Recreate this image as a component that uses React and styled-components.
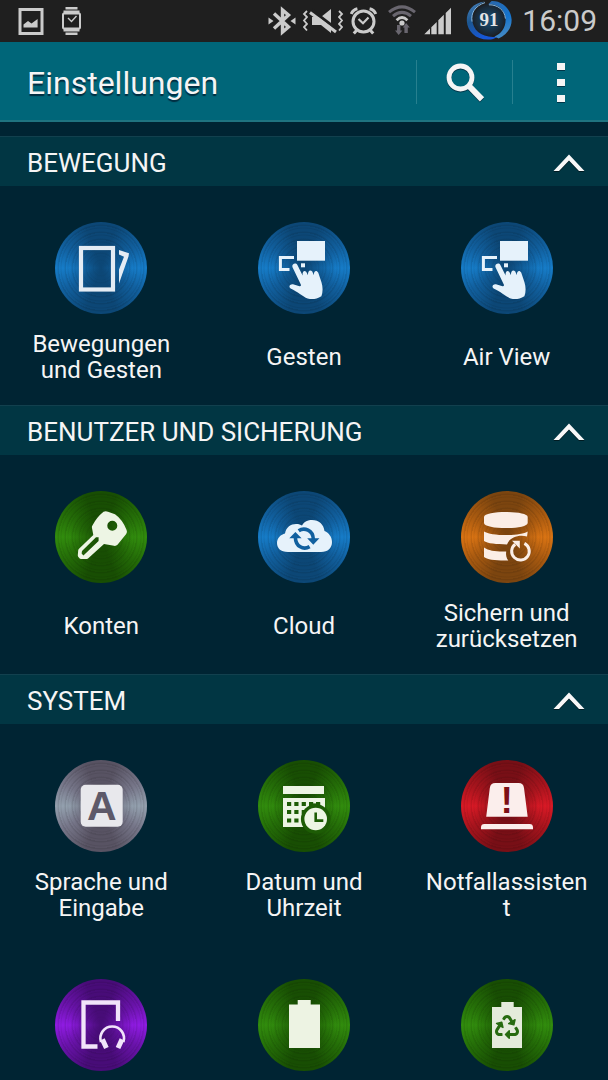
import React, { useState } from 'react';
import styled, { createGlobalStyle } from 'styled-components';
import { FaRecycle } from 'react-icons/fa';

const GlobalStyle = createGlobalStyle`
  * {
    box-sizing: border-box;
  }
  body {
    margin: 0;
    background-color: #002433;
    font-family: Roboto, "Liberation Sans", sans-serif;
    color: #f5f5f5;
  }
`

const Screen = styled.div`
  height: 100vh;
  display: flex;
  flex-direction: column;
  overflow: hidden;
`

const StatusBar = styled.div`
  flex: none;
  height: 42px;
  padding: 0 11px 0 18px;
  display: flex;
  justify-content: space-between;
  background-color: #1f1f1f;
  color: #cbcbcb;
`

const StatusGroup = styled.div`
  display: flex;
  align-items: center;
  gap: ${({ $gap }) => $gap}px;
`

const StatusSvg = styled.svg`
  display: block;
  height: 42px;
  fill: none;
  stroke: none;
`

const Clock = styled.span`
  font-size: 30px;
  line-height: 42px;
`

const ActionBar = styled.header`
  flex: none;
  height: 80px;
  display: flex;
  align-items: center;
  background-color: #006679;
  border-bottom: 2px solid #1f7380;
`

const Title = styled.h1`
  flex: 1;
  margin: 0;
  padding: 4px 0 0 27px;
  font-size: 32px;
  font-weight: 400;
  text-shadow: 0 2px 1px rgba(0, 20, 40, 0.7);
`

const ActionButton = styled.button`
  width: 96px;
  height: 44px;
  margin-top: 2px;
  padding: 0;
  border: 0;
  border-left: 1px solid #27808f;
  background: none;
  display: flex;
  align-items: center;
  justify-content: center;
  cursor: pointer;

  svg {
    filter: drop-shadow(0 1px 0 rgba(0, 20, 40, 0.6));
  }
`

const List = styled.main`
  flex: 1;
  min-height: 0;
  padding-top: 14px;
  overflow-y: auto;
  scrollbar-width: none;
`

const SectionHeader = styled.button`
  width: 100%;
  height: 50px;
  padding: 2px 23px 0 27px;
  border: 0;
  border-top: 1px solid #12404e;
  display: flex;
  align-items: center;
  justify-content: space-between;
  background-color: #013643;
  color: inherit;
  font-family: inherit;
  font-size: 26px;
  text-transform: uppercase;
  cursor: pointer;
`

const Chevron = styled.svg`
  transform: ${({ $open }) => ($open ? 'none' : 'rotate(180deg)')};
  filter: drop-shadow(0 1px 0 rgba(0, 0, 0, 0.5));
`

const Grid = styled.div`
  display: grid;
  grid-template-columns: repeat(3, 1fr);
`

const Tile = styled.a`
  height: 219px;
  padding: 36px 20px 5px;
  display: flex;
  flex-direction: column;
  align-items: center;
  color: inherit;
  text-decoration: none;
`

const Disc = styled.span`
  flex: none;
  width: 92px;
  height: 92px;
  border-radius: 50%;
  background:
    radial-gradient(circle, ${({ $metal }) => $metal.dark} 0%, transparent 50%),
    repeating-radial-gradient(circle, rgba(0, 0, 0, 0.09) 0 1px, transparent 2px 4px, rgba(0, 0, 0, 0.07) 5px, transparent 6px 7px),
    conic-gradient(
      ${({ $metal }) => `${$metal.dark} 0deg 20deg, ${$metal.mid} 60deg, ${$metal.bright} 90deg, ${$metal.mid} 120deg, ${$metal.dark} 160deg 200deg, ${$metal.mid} 240deg, ${$metal.bright} 270deg, ${$metal.mid} 300deg, ${$metal.dark} 340deg`}
    );

  svg {
    display: block;
  }
`

const Label = styled.span`
  flex: 1;
  width: 100%;
  display: flex;
  align-items: center;
  justify-content: center;
  text-align: center;
  font-size: 24px;
  line-height: 26px;
  overflow-wrap: anywhere;
`

const metals = {
  blue: { bright: '#167cc8', mid: '#11609f', dark: '#0c4776' },
  green: { bright: '#318c0d', mid: '#256f08', dark: '#184e03' },
  orange: { bright: '#d97313', mid: '#ab5b10', dark: '#7c450f' },
  gray: { bright: '#93a0ae', mid: '#77778a', dark: '#585363' },
  red: { bright: '#d81925', mid: '#a8141d', dark: '#780f16' },
  purple: { bright: '#8f1be2', mid: '#6a13ab', dark: '#480c78' },
}

const Glyph = ({ children, fill = '#e6f2fb' }) => (
  <svg width="92" height="92" viewBox="0 0 92 92" fill={fill} aria-hidden="true">
    {children}
  </svg>
)

const MotionGlyph = () => (
  <Glyph fill="#e4ecf4">
    <rect x="26" y="26" width="32" height="41.5" fill="none" stroke="#e4ecf4" strokeWidth="4.2" />
    <path d="M64 28L74 31.3L73.5 34.5L64 61.5V47.5L69 34.8L64 32.5Z" />
  </Glyph>
)

const HandGlyph = () => (
  <Glyph>
    <rect x="39" y="19" width="28" height="19.7" />
    <path d="M36 35.5H22.4V47.6H31.5" fill="none" stroke="#e6f2fb" strokeWidth="3" />
    <rect x="43" y="41.3" width="4" height="4" />
    <path d="M34.4 45C33.6 42 37.8 40.2 39.4 43L44.6 53.4C44.2 49.2 46.3 47.8 48.2 49.8L50 53.2C49.6 48.6 52.4 47.2 54.3 49.6L55.8 53.2C55.6 48.8 58.6 47.6 60.2 50.6L63.4 60C65 65 65 70 63.4 74.2C58.6 77.2 53.8 77.8 49.6 76.4C44.6 74.4 39.8 69.6 32.6 66.4C30.4 65 31.6 61.8 35 62.3L41.6 64.2C42.8 64.4 43.2 63.6 42.8 62.6Z" />
  </Glyph>
)

const KeyGlyph = () => (
  <Glyph fill="#edf5e4">
    <path
      fillRule="evenodd"
      d="M48.5 20.8Q50.7 19.6 53 20.7L60 23.3Q67.5 28.5 71.6 39Q72.6 41.3 71.2 43L62.5 53.8Q61 55.2 59 54.8L49 53L33 67.4Q32 68 31 68H26Q25 68 24.4 67.2L23.2 65.8Q22.7 65 22.8 64L23.2 59.4Q23.3 58.6 24 57.8L38.3 44L36.9 36.6Q36.7 35.4 37.4 34.4Q42 26 48.5 20.8ZM57.3 29.7A5 5 0 1 0 57.3 39.7A5 5 0 1 0 57.3 29.7ZM41 46.3L27 59.9L26.6 62.6L28.4 64.4L43.6 49.9V46.3Z"
    />
  </Glyph>
)

const CloudGlyph = () => (
  <Glyph>
    <path d="M30 61C22.5 61 19 57 19 52C19 47 23 43.4 27 42.5C28 36 33 33 38 33C41 33 42.6 33.6 44 34.5C46 30.6 50 29 54 29C61 29 65.8 33.5 66.5 40C71 42 74 46 74 51C74 57 70 61 63 61Z" />
    <g fill="none" stroke="#11609f" strokeWidth="3.6">
      <path d="M40.7 39.8C46.4 35.8 55 39.4 55.3 48" />
      <path d="M37.4 46.6C37.6 55.4 45.4 59.4 51.6 55.6" />
    </g>
    <path d="M49.2 47.3H61.4L55.3 53.8ZM31.3 47.3H43.6L37.4 40.9Z" fill="#11609f" />
  </Glyph>
)

const BackupGlyph = () => (
  <Glyph fill="#fbeee6">
    <path d="M23 26C23 19.4 66.7 19.4 66.7 26V32C66.7 38.8 23 38.8 23 32Z" />
    <path d="M23 40.4C30 45.2 60 45.2 66.7 40.4L66 45.4C57 43.4 48.6 46.6 46 53.4C36 53.4 26 52.4 23 50Z" />
    <path d="M23 56.4C28 59.8 36 60.8 45.2 60.4C44.6 64 45.5 67 47.3 69.5C36 69.8 26 68.8 23 66Z" />
    <path d="M63.4 52.4A8.8 8.8 0 1 1 54.2 53.2" fill="none" stroke="#fbeee6" strokeWidth="3" />
    <path d="M51 49.8H58.8V57.4L56.2 55L53.8 52.6Z" />
  </Glyph>
)

const LanguageGlyph = () => (
  <Glyph fill="#e8e8ec">
    <rect x="25.7" y="24.7" width="42" height="42" rx="5" />
    <text x="46.7" y="60" textAnchor="middle" fontFamily="Liberation Sans, sans-serif" fontWeight="700" fontSize="41" fill="#5d5969">A</text>
  </Glyph>
)

const calendarDays = [
  [29, 42], [36.3, 42], [43.7, 42], [51, 42], [58, 42],
  [29, 50], [36.3, 50],
  [29, 58.5], [36.3, 58.5],
]

const DateGlyph = () => (
  <Glyph fill="#edf5e4">
    <rect x="25" y="26" width="41" height="8" />
    <path d="M25 38H67V50H57V67H25Z" />
    <g fill="#1d5c05">
      {calendarDays.map(([x, y]) => (
        <rect key={`${x}-${y}`} x={x} y={y} width="4.2" height="4" />
      ))}
      <rect x="43.7" y="50" width="3" height="4" />
      <rect x="52.5" y="43.4" width="9.6" height="4" />
      <circle cx="57.7" cy="59" r="14.8" />
    </g>
    <circle cx="57.7" cy="59" r="11.3" />
    <path d="M57.7 52.5V60.6H65.3" fill="none" stroke="#1d5c05" strokeWidth="2.6" />
  </Glyph>
)

const EmergencyGlyph = () => (
  <Glyph fill="#fbeeec">
    <path d="M28.8 28Q29.4 23 34.4 23H57.6Q62.4 23 63 28L66.7 56.8H25.2Z" />
    <path d="M20 69.3V67.4Q20 64 23.4 64H68.6Q72 64 72 67.4V69.3Z" />
    <text x="45.7" y="53" textAnchor="middle" fontFamily="Liberation Sans, sans-serif" fontWeight="700" fontSize="36" fill="#7d1016">!</text>
  </Glyph>
)

const AccessoryGlyph = () => (
  <Glyph fill="#f1e4fa">
    <g fill="none" stroke="#f1e4fa">
      <path d="M63 42V23.5H28.5V67.5H42.5" strokeWidth="4.3" />
      <path d="M46 63A11.8 11.8 0 1 1 68.4 63" strokeWidth="2.6" />
      <path d="M47.4 60.4L51.4 69M67 60.4L63 69" strokeWidth="5" />
    </g>
  </Glyph>
)

const BatteryGlyph = () => (
  <Glyph fill="#edf3e3">
    <path d="M31 25.5H39.7V21H52.7V25.5H62V69H31Z" />
  </Glyph>
)

const PowerSavingGlyph = () => (
  <Glyph fill="#e4ebdb">
    <path d="M31 28H40.3V23H52.7V28H61V69H31Z" />
    <FaRecycle x="34" y="36" size={24} color="#276b10" />
  </Glyph>
)

const sections = [
  {
    name: 'Bewegung',
    items: [
      { label: 'Bewegungen und Gesten', metal: 'blue', icon: MotionGlyph },
      { label: 'Gesten', metal: 'blue', icon: HandGlyph },
      { label: 'Air View', metal: 'blue', icon: HandGlyph },
    ],
  },
  {
    name: 'Benutzer und Sicherung',
    items: [
      { label: 'Konten', metal: 'green', icon: KeyGlyph },
      { label: 'Cloud', metal: 'blue', icon: CloudGlyph },
      { label: 'Sichern und zurücksetzen', metal: 'orange', icon: BackupGlyph },
    ],
  },
  {
    name: 'System',
    items: [
      { label: 'Sprache und Eingabe', metal: 'gray', icon: LanguageGlyph },
      { label: 'Datum und Uhrzeit', metal: 'green', icon: DateGlyph },
      { label: 'Notfallassistent', metal: 'red', icon: EmergencyGlyph },
      { label: 'Zubehör', metal: 'purple', icon: AccessoryGlyph, iconOnly: true },
      { label: 'Akku', metal: 'green', icon: BatteryGlyph, iconOnly: true },
      { label: 'Energie sparen', metal: 'green', icon: PowerSavingGlyph, iconOnly: true },
    ],
  },
]

const Status = () => (
  <StatusBar>
    <StatusGroup $gap={17}>
      <StatusSvg width="26" viewBox="0 0 26 42">
        <rect x="2" y="9.5" width="22" height="24" stroke="#cbcbcb" strokeWidth="3" />
        <path d="M5.5 27.6V24.5L10 21L13.5 23.5L19.6 19V27.6Z" fill="#cbcbcb" />
      </StatusSvg>
      <StatusSvg width="22" viewBox="0 0 22 42">
        <path d="M4.5 7H16.5V9.5H4.5ZM2.5 10.5H18.5V14H2.5ZM2.5 28H18.5V31.5H2.5ZM4.5 32.5H16.5V35H4.5Z" fill="#cbcbcb" />
        <rect x="2" y="13.5" width="17" height="15" rx="1" stroke="#cbcbcb" strokeWidth="2" />
        <path d="M7 18L10.5 21.5L15.5 16" stroke="#cbcbcb" strokeWidth="1.4" />
      </StatusSvg>
    </StatusGroup>
    <StatusGroup $gap={6}>
      <StatusSvg width="28" viewBox="0 0 28 42">
        <path d="M6 13.5L20.5 27L14.5 32V10L20.5 15L6 28.5" stroke="#cbcbcb" strokeWidth="3.4" />
        <path d="M0.5 17.5L5.5 21L0.5 24.5ZM27.5 17.5L22.5 21L27.5 24.5Z" fill="#cbcbcb" />
      </StatusSvg>
      <StatusSvg width="42" viewBox="0 0 42 42">
        <path d="M5 11L2 14L5 17L2 20.5L5 24L2 27L5 30.5M37 11L40 14L37 17L40 20.5L37 24L40 27L37 30.5" stroke="#cbcbcb" strokeWidth="1.8" />
        <path d="M10 17H19L29 9V33L19 25H10Z" fill="#cbcbcb" />
        <path d="M9 9.5L35 29.5" stroke="#1f1f1f" strokeWidth="3" />
        <path d="M8 12.5L34 32" stroke="#cbcbcb" strokeWidth="3" />
      </StatusSvg>
      <StatusSvg width="28" viewBox="0 0 28 42">
        <circle cx="13.5" cy="21.5" r="10.5" stroke="#cbcbcb" strokeWidth="3" />
        <path d="M8.5 19L13 23.2L18.5 17.5" stroke="#cbcbcb" strokeWidth="2.2" />
        <path d="M1.2 14Q3 9.8 7.4 8.8M25.8 14Q24 9.8 19.6 8.8M6.5 30.5L3.8 33.6M20.5 30.5L23.2 33.6" stroke="#cbcbcb" strokeWidth="3" />
      </StatusSvg>
      <StatusSvg width="34" viewBox="0 0 34 42">
        <path d="M5 12.2Q18 1.6 31 12.2M9 16.2Q18 8.6 27 16.2" stroke="#69666f" strokeWidth="3" />
        <path d="M12.6 20.2Q18 15 23.4 20.2" stroke="#cbcbcb" strokeWidth="2.8" />
        <circle cx="18" cy="23" r="2.6" fill="#cbcbcb" />
        <path d="M13 25H16.4V30.5H18.4L14.7 35L11 30.5H13ZM20.4 33H23.8V27.5H25.8L22.1 23L18.8 27.5H20.4Z" fill="#69666f" />
      </StatusSvg>
      <StatusSvg width="28" viewBox="0 0 28 42">
        <path d="M0.3 34.3L6 28.6V34.3ZM7.3 34.3V27.3L12.7 21.9V34.3ZM14.3 34.3V20.3L19.8 14.8V34.3ZM21.7 34.3V13L27 7.7V34.3Z" fill="#cbcbcb" />
      </StatusSvg>
      <StatusSvg width="58" viewBox="0 0 58 42">
        <defs>
          <linearGradient id="ringLeft" x1="0" y1="0" x2="0.4" y2="1">
            <stop offset="0" stopColor="#4c86c0" />
            <stop offset="0.5" stopColor="#1c568f" />
            <stop offset="1" stopColor="#1657d8" />
          </linearGradient>
          <linearGradient id="ringRight" x1="0" y1="0" x2="0.3" y2="1">
            <stop offset="0" stopColor="#2b66a8" />
            <stop offset="0.6" stopColor="#1474cf" />
            <stop offset="1" stopColor="#3f87c4" />
          </linearGradient>
          <radialGradient id="ringCore">
            <stop offset="0" stopColor="#14507c" />
            <stop offset="1" stopColor="#1b222b" />
          </radialGradient>
        </defs>
        <circle cx="31" cy="20" r="16" fill="url(#ringCore)" />
        <path d="M27 1.4C15 2.6 8.4 11 8.8 21C9.4 32 19 41 33 39.4C36 39 38 38 39.6 36.6C25 38.6 14.6 31 14.2 19C14 11 18.6 4.6 27 1.4Z" fill="url(#ringLeft)" />
        <path d="M30 4.4C39 3.4 47.4 9.6 47.6 19C47.8 28 43 34 36.6 36.4L40.6 38.4C48.6 35 54 28 53.6 19.4C53 9 44 0.6 33.6 1Z" fill="url(#ringRight)" />
        <path d="M27 2.6C17 6 12.6 13 14 21.6" stroke="#86b4dc" strokeWidth="1" />
        <path d="M31 4.8C39.4 4.6 46.8 10 47.4 18.6" stroke="#86b4dc" strokeWidth="1" />
        <text x="31" y="26" textAnchor="middle" fontFamily="Liberation Serif, serif" fontWeight="700" fontSize="19" fill="#e4e4e4">91</text>
      </StatusSvg>
      <Clock>16:09</Clock>
    </StatusGroup>
  </StatusBar>
)

const Section = ({ name, items }) => {
  const [open, setOpen] = useState(true)
  return (
    <section>
      <SectionHeader type="button" aria-expanded={open} onClick={() => setOpen(!open)}>
        {name}
        <Chevron $open={open} width="32" height="18" viewBox="0 0 32 18" aria-hidden="true">
          <path d="M0.5 17L16 0.5L31.5 17H26L16 6.4L6 17Z" fill="#f8f8f8" />
        </Chevron>
      </SectionHeader>
      {open && (
        <Grid>
          {items.map(({ label, metal, icon: Icon, iconOnly }) => (
            <Tile key={label} href="#" aria-label={label}>
              <Disc $metal={metals[metal]}>
                <Icon />
              </Disc>
              {!iconOnly && <Label>{label}</Label>}
            </Tile>
          ))}
        </Grid>
      )}
    </section>
  )
}

const App = () => {
  return (
    <Screen>
      <GlobalStyle />
      <Status />
      <ActionBar>
        <Title>Einstellungen</Title>
        <ActionButton type="button" aria-label="Suchen">
          <svg width="40" height="40" viewBox="0 0 40 40" fill="none" stroke="#f5f5f5">
            <circle cx="15.5" cy="15.5" r="11.5" strokeWidth="4.8" />
            <path d="M24 24L37 37.4" strokeWidth="6" />
          </svg>
        </ActionButton>
        <ActionButton type="button" aria-label="Weitere Optionen">
          <svg width="8" height="40" viewBox="0 0 8 40" fill="#f5f5f5">
            <path d="M0 1H8V8H0ZM0 17H8V24H0ZM0 33H8V40H0Z" />
          </svg>
        </ActionButton>
      </ActionBar>
      <List>
        {sections.map((section) => (
          <Section key={section.name} {...section} />
        ))}
      </List>
    </Screen>
  );
};

export default App;
